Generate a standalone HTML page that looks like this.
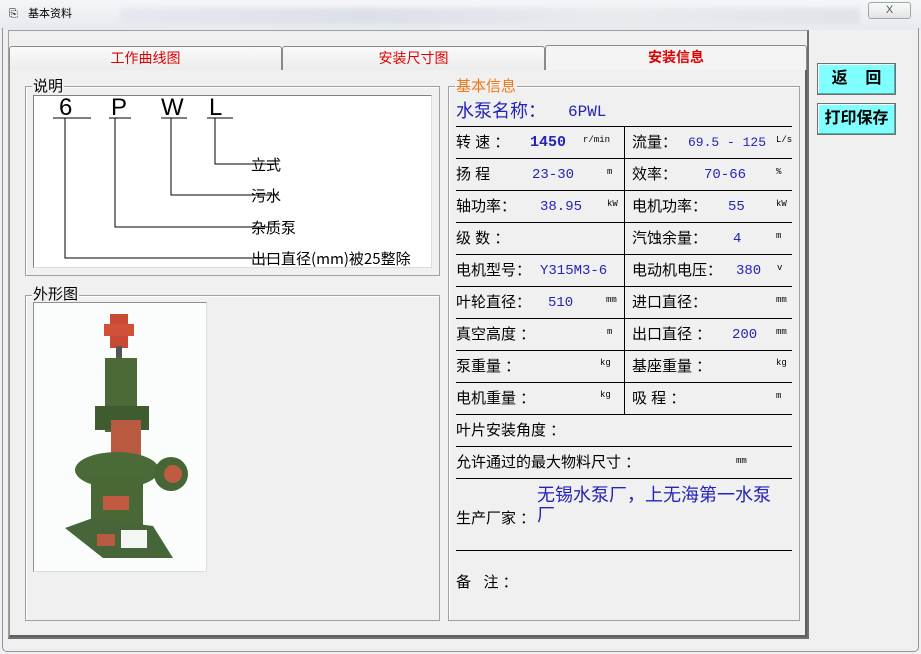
<!DOCTYPE html>
<html><head><meta charset="utf-8"><style>
*{margin:0;padding:0;box-sizing:border-box}
body{width:921px;height:654px;background:#f0f0f0;position:relative;overflow:hidden;font-family:"Liberation Sans","Noto Sans CJK SC","WenQuanYi Zen Hei",sans-serif;color:#000}
.a{position:absolute;white-space:nowrap;line-height:1}
.l{font-size:15px}
.v{font-size:14px;color:#2424b8;font-family:"Liberation Mono","Noto Sans CJK SC",monospace}
.u{font-size:9px;font-family:"Liberation Mono",monospace}
.hl{position:absolute;left:456px;width:336px;height:1px;background:#000}
.grp{position:absolute;border:1px solid #a0a0a0;box-shadow:1px 1px 0 #fff inset}
.gt{position:absolute;background:#f0f0f0;font-size:15px;line-height:15px;padding:0 1px}
.tab{position:absolute;top:46px;height:24px;border:1px solid #8a8a8a;border-bottom:none;border-radius:3px 3px 0 0;background:linear-gradient(#fafafa,#ececec);color:#e00000;font-size:14px;text-align:center;line-height:22px}
.btn{position:absolute;left:817px;width:79px;height:32px;background:#80ffff;border:1px solid #707070;box-shadow:inset -1px -1px 0 #5aa,inset 1px 1px 0 #fff;font-size:16px;font-weight:bold;text-align:center;line-height:30px}
</style></head><body>
<div style="position:absolute;left:0;top:0;width:921px;height:30px;background:linear-gradient(#f4f6f8,#e6eaee)"></div>
<div style="position:absolute;left:120px;top:8px;width:740px;height:16px;background:linear-gradient(90deg,#e4e8ee,#d8dde4,#e8ebee,#dde1e6);opacity:.8;filter:blur(2px)"></div>
<div class="a" style="left:9px;top:9px;font-size:11px">&#x2398;</div>
<div class="a" style="left:28px;top:9px;font-size:11px">基本资料</div>
<div style="position:absolute;left:868px;top:2px;width:43px;height:17px;border:1px solid #9aa;border-radius:3px;background:linear-gradient(#fafafa,#e4e4e4);font-size:11px;text-align:center;line-height:15px;color:#555">X</div>
<div style="position:absolute;left:2px;top:28px;width:917px;height:624px;border:1px solid #8a96a4;border-top:none;border-radius:0 0 5px 5px"></div>
<div style="position:absolute;left:8px;top:30px;width:801px;height:609px;border:1px solid #a0a0a0;border-right:2px solid #707070;border-bottom:2px solid #707070"></div>
<div style="position:absolute;left:9px;top:69px;width:798px;height:568px;border:1px solid #909090;border-right:2px solid #606060;border-bottom:2px solid #606060;background:#f0f0f0"></div>
<div class="tab" style="left:9px;width:273px">工作曲线图</div>
<div class="tab" style="left:282px;width:263px">安装尺寸图</div>
<div class="tab" style="left:545px;width:262px;height:25px;background:#f4f4f4;font-weight:bold;top:45px">安装信息</div>
<div class="btn" style="top:63px">返&nbsp;&nbsp;&nbsp;&nbsp;回</div>
<div class="btn" style="top:103px">打印保存</div>

<div class="grp" style="left:25px;top:86px;width:415px;height:190px"></div>
<div class="gt" style="left:32px;top:79px">说明</div>
<div style="position:absolute;left:33px;top:95px;width:399px;height:173px;background:#fff;border:1px solid #808080;border-right-color:#ddd;border-bottom-color:#ddd"></div>
<svg style="position:absolute;left:33px;top:95px" width="399" height="173">
<g fill="none" stroke="#000" stroke-width="1">
<path d="M20 23h38M76 23h22M128 23h26M174 23h26"/>
<path d="M32 23v140h214M82 23v109h164M138 23v77h108M182 23v46h64"/>
</g>
<g font-family="DejaVu Sans ExtraLight,Liberation Sans" font-weight="200" font-size="24" fill="#000">
<text x="26" y="20">6</text><text x="78" y="20">P</text><text x="128" y="20">W</text><text x="176" y="20">L</text>
</g>
<g font-family="Noto Sans CJK SC,sans-serif" font-size="15" fill="#000">
<text x="218" y="75">立式</text><text x="218" y="106">污水</text><text x="218" y="138">杂质泵</text><text x="218" y="169">出口直径(mm)被25整除</text>
</g>
</svg>

<div class="grp" style="left:25px;top:295px;width:415px;height:326px"></div>
<div class="gt" style="left:32px;top:287px">外形图</div>
<div style="position:absolute;left:33px;top:302px;width:174px;height:270px;background:#fbfdfc;border:1px solid #909090;border-right-color:#ddd;border-bottom-color:#ddd"></div>
<svg style="position:absolute;left:33px;top:302px" width="174" height="270">
<rect x="77" y="12" width="18" height="34" fill="#c84a34"/>
<rect x="71" y="22" width="30" height="12" fill="#d0503a"/>
<rect x="83" y="44" width="6" height="16" fill="#555"/>
<rect x="72" y="56" width="32" height="74" fill="#4c6a38"/>
<rect x="62" y="104" width="54" height="24" fill="#3e5c30"/>
<rect x="78" y="118" width="30" height="36" fill="#b85a40"/>
<ellipse cx="84" cy="168" rx="42" ry="18" fill="#4a6a38"/>
<circle cx="138" cy="172" r="17" fill="#466636"/>
<circle cx="140" cy="172" r="9" fill="#c05a40"/>
<rect x="58" y="175" width="52" height="50" fill="#4a6836"/>
<rect x="70" y="194" width="26" height="14" fill="#c05a40"/>
<path d="M32 226l28-10 60 8 20 32H70z" fill="#46663a"/>
<rect x="64" y="232" width="18" height="12" fill="#b85a40"/>
<rect x="88" y="228" width="26" height="18" fill="#f4f6f4"/>
</svg>

<div class="grp" style="left:448px;top:86px;width:352px;height:535px"></div>
<div class="gt" style="left:455px;top:79px;color:#f07818">基本信息</div>
<div class="a" style="left:456px;top:102px;font-size:18px;color:#2424b8">水泵名称：</div>
<div class="a v" style="left:568px;top:104px;font-size:16px">6PWL</div>
<div class="hl" style="top:126px"></div><div class="hl" style="top:158px"></div><div class="hl" style="top:190px"></div><div class="hl" style="top:222px"></div><div class="hl" style="top:254px"></div><div class="hl" style="top:286px"></div><div class="hl" style="top:318px"></div><div class="hl" style="top:350px"></div><div class="hl" style="top:382px"></div><div class="hl" style="top:414px"></div><div class="hl" style="top:446px"></div><div class="hl" style="top:478px"></div><div class="hl" style="top:550px"></div>
<div style="position:absolute;left:624px;top:126px;width:1px;height:288px;background:#000"></div>

<div class="a l" style="left:456px;top:135px">转&nbsp;速&nbsp;：</div><div class="a v" style="left:530px;top:135px;font-weight:bold;font-size:15px">1450</div><div class="a u" style="left:583px;top:136px">r/min</div>
<div class="a l" style="left:632px;top:135px">流量：</div><div class="a v" style="left:688px;top:136px;font-size:13px">69.5 - 125</div><div class="a u" style="left:776px;top:136px">L/s</div>

<div class="a l" style="left:456px;top:167px">扬&nbsp;程</div><div class="a v" style="left:532px;top:168px">23-30</div><div class="a u" style="left:607px;top:168px">m</div>
<div class="a l" style="left:632px;top:167px">效率：</div><div class="a v" style="left:704px;top:168px">70-66</div><div class="a u" style="left:776px;top:168px">%</div>

<div class="a l" style="left:456px;top:199px">轴功率：</div><div class="a v" style="left:540px;top:200px">38.95</div><div class="a u" style="left:607px;top:200px">kW</div>
<div class="a l" style="left:632px;top:199px">电机功率：</div><div class="a v" style="left:728px;top:200px">55</div><div class="a u" style="left:776px;top:200px">kW</div>

<div class="a l" style="left:456px;top:231px">级&nbsp;数&nbsp;：</div>
<div class="a l" style="left:632px;top:231px">汽蚀余量：</div><div class="a v" style="left:733px;top:232px">4</div><div class="a u" style="left:776px;top:232px">m</div>

<div class="a l" style="left:456px;top:263px">电机型号：</div><div class="a v" style="left:540px;top:264px">Y315M3-6</div>
<div class="a l" style="left:632px;top:263px">电动机电压：</div><div class="a v" style="left:736px;top:264px">380</div><div class="a u" style="left:777px;top:264px">v</div>

<div class="a l" style="left:456px;top:295px">叶轮直径：</div><div class="a v" style="left:548px;top:296px">510</div><div class="a u" style="left:606px;top:296px">mm</div>
<div class="a l" style="left:632px;top:295px">进口直径：</div><div class="a u" style="left:776px;top:296px">mm</div>

<div class="a l" style="left:456px;top:327px">真空高度&nbsp;：</div><div class="a u" style="left:607px;top:328px">m</div>
<div class="a l" style="left:632px;top:327px">出口直径&nbsp;：</div><div class="a v" style="left:732px;top:328px">200</div><div class="a u" style="left:776px;top:328px">mm</div>

<div class="a l" style="left:456px;top:359px">泵重量&nbsp;：</div><div class="a u" style="left:600px;top:359px">kg</div>
<div class="a l" style="left:632px;top:359px">基座重量&nbsp;：</div><div class="a u" style="left:776px;top:359px">kg</div>

<div class="a l" style="left:456px;top:391px">电机重量&nbsp;：</div><div class="a u" style="left:600px;top:391px">kg</div>
<div class="a l" style="left:632px;top:391px">吸&nbsp;程&nbsp;：</div><div class="a u" style="left:776px;top:392px">m</div>

<div class="a l" style="left:456px;top:423px">叶片安装角度&nbsp;：</div>
<div class="a l" style="left:456px;top:455px">允许通过的最大物料尺寸&nbsp;：</div><div class="a u" style="left:736px;top:457px">mm</div>
<div class="a" style="left:537px;top:486px;font-size:18px;color:#2424b8">无锡水泵厂，上无海第一水泵</div>
<div class="a" style="left:537px;top:506px;font-size:18px;color:#2424b8">厂</div>
<div class="a l" style="left:456px;top:511px">生产厂家&nbsp;：</div>
<div class="a l" style="left:456px;top:575px">备&nbsp;&nbsp;&nbsp;注&nbsp;：</div>
</body></html>
